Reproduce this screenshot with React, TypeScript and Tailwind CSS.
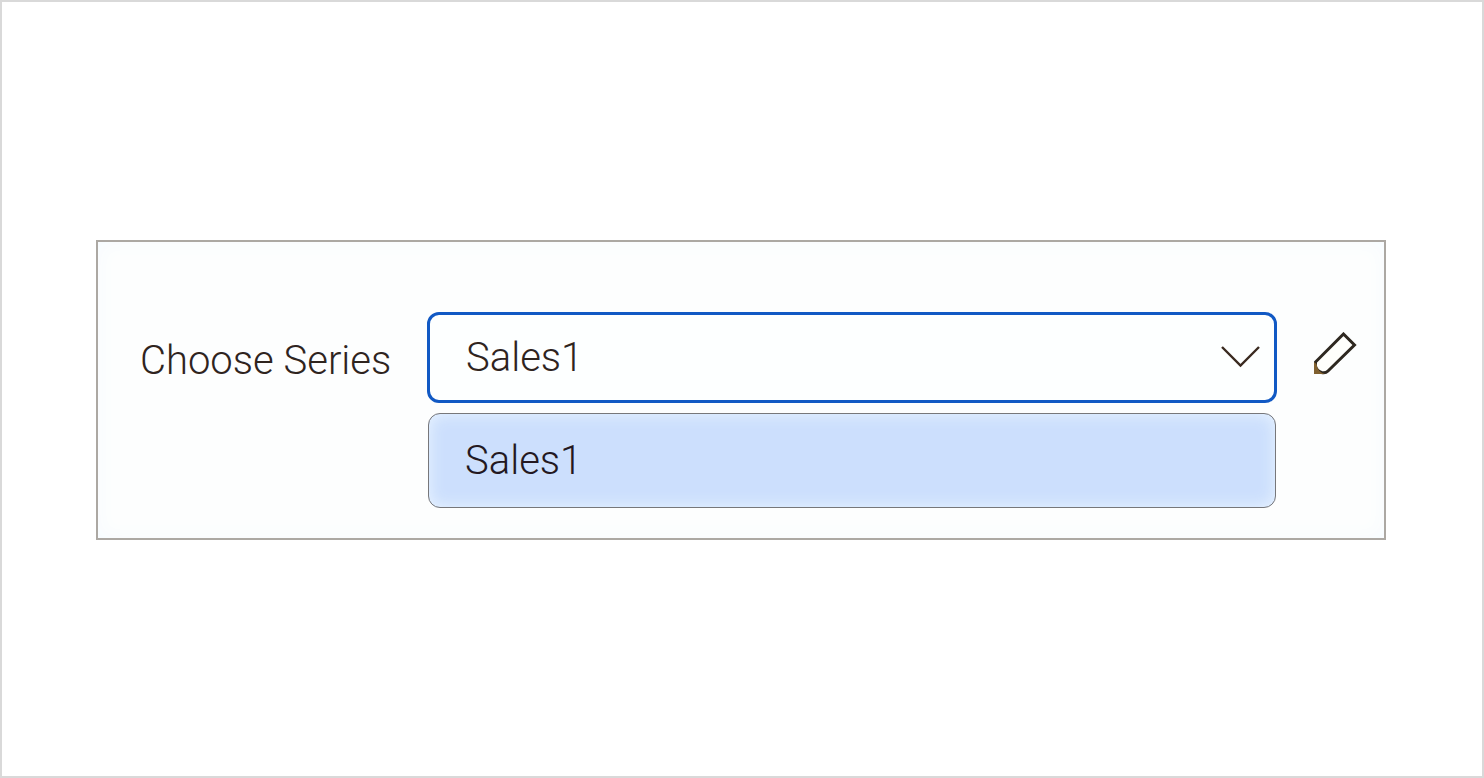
import { useState } from 'react'

const seriesOptions = ['Sales1']

function ChevronIcon() {
  return (
    <svg
      viewBox="0 0 40 24"
      className="pointer-events-none absolute top-1/2 right-4 h-6 w-10 -translate-y-1/2"
      fill="none"
      stroke="#3a2a20"
      strokeWidth="2.4"
      aria-hidden="true"
    >
      <path d="M1 1 L19.5 19.5 L38 1" />
    </svg>
  )
}

function PencilIcon() {
  return (
    <svg viewBox="0 0 44 44" className="h-11 w-11" aria-hidden="true">
      <path
        d="M30.5 2 L41.5 13 L15 39 Q12.5 41.5 8.5 40.5 Q4 39 2.5 34.5 L2.5 30 Z"
        fill="#fffffc"
        stroke="#2e2820"
        strokeWidth="3"
      />
      <path d="M1 30 L1 42 L12 42 Q4.5 40 3.5 32 Z" fill="#80602f" />
    </svg>
  )
}

export default function App() {
  const [series, setSeries] = useState('Sales1')

  return (
    <main className="flex min-h-screen flex-col justify-center border-2 border-[#d9d9d9] bg-white pt-0.5 pr-24 pl-[94px] font-['Roboto',sans-serif] text-[40px] font-[350] text-[#2f241e]">
      <section className="grid grid-cols-[287px_1fr_80px] border-2 border-[#aca8a3] bg-[#fdfefe] pt-[70px] pr-[27px] pb-[30px] pl-[42px] shadow-[inset_0_0_20px_#f6fbff]">
        <label htmlFor="series" className="self-center pt-1.5 leading-[48px] whitespace-nowrap">
          Choose Series
        </label>

        <div className="relative">
          <select
            id="series"
            value={series}
            onChange={(e) => setSeries(e.target.value)}
            className="block h-[91px] w-full appearance-none rounded-xl border-3 border-[#1159c4] bg-[#fdffff] pr-16 pl-9 outline-none"
          >
            {seriesOptions.map((option) => (
              <option key={option}>{option}</option>
            ))}
          </select>
          <ChevronIcon />
        </div>

        <button type="button" aria-label="Edit series" className="ml-9 self-center pb-2">
          <PencilIcon />
        </button>

        {/* Open option list */}
        <ul
          role="listbox"
          aria-label="Series"
          className="col-start-2 mx-px mt-2.5 overflow-hidden rounded-xl border border-[#77777a] bg-[#ccdffd] shadow-[inset_0_0_16px_#eaf5ff]"
        >
          {seriesOptions.map((option) => (
            <li
              key={option}
              role="option"
              aria-selected={option === series}
              onClick={() => setSeries(option)}
              className="flex h-[93px] items-center pl-9 text-[#231821]"
            >
              {option}
            </li>
          ))}
        </ul>
      </section>
    </main>
  )
}
